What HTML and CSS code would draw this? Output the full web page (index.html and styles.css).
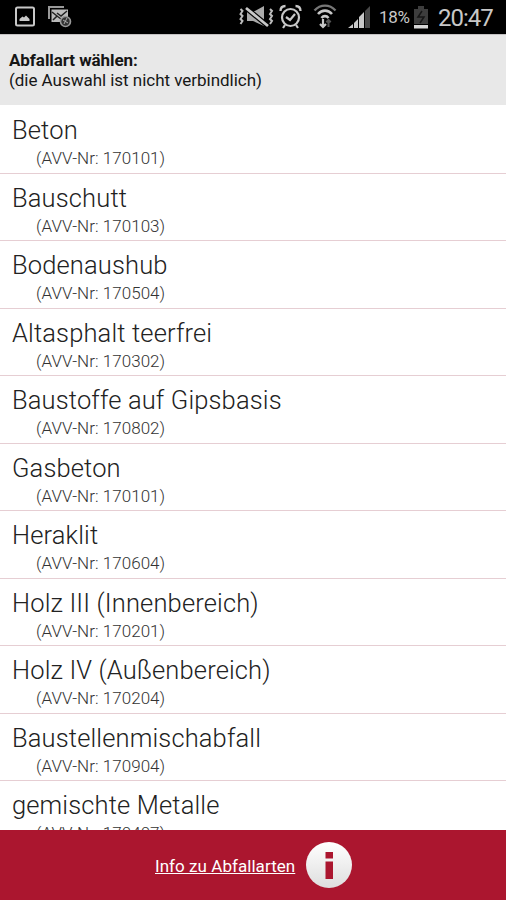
FILE: index.html
```html
<!DOCTYPE html>
<html lang="de">
<head>
<meta charset="utf-8">
<title>Abfallart wählen</title>
<link rel="stylesheet" href="styles.css">
</head>
<body>
<div class="screen">
  <div class="status">
    <svg class="status-icons" width="370" height="34" viewBox="0 0 370 34" fill="none" stroke="#c8c8c8">
      <rect x="16" y="7.500" width="18" height="18" rx="1.500" stroke-width="2"/>
      <path d="M19.500 21v-2l3-2.500 1.500 1 2-2 3.500 3.500v2z" fill="#c8c8c8" stroke="none"/>
      <path d="M49 19V7h15" stroke="#999" stroke-width="2"/>
      <path d="M51.500 9.500H68V22H51.500z" fill="#bbb" stroke="none"/>
      <path d="M52 12l5 4-4 4M67 11l-6 5-4-3M57 16l4 3" stroke="#222" stroke-width="1.500"/>
      <circle cx="65.500" cy="21.500" r="5" fill="#333" stroke="#999" stroke-width="1.600"/>
      <path d="M63 20l5 3M67 18l-3 6" stroke="#aaa"/>
      <path d="M247 12h6l11-6v20l-11-5h-6z" fill="#aaa" stroke="none"/>
      <path d="M246 8l22 18" stroke="#000" stroke-width="5"/>
      <path d="M246 8l22 18" stroke-width="2.800"/>
      <path d="M240.500 9l2 2-2 3 2 2-2 3 2 2-2 3M270 9l2 2-2 3 2 2-2 3 2 2-2 3" stroke="#bbb" stroke-width="2"/>
      <circle cx="290.500" cy="17.500" r="8.500" stroke-width="2.200"/>
      <path d="M286 17l4 3 5-6M285 25l-2 3M296 25l2 3" stroke-width="2.200"/>
      <path d="M280.500 11c0-3 2-5 5-5M300.500 11c0-3-2-5-5-5" stroke-width="2.300"/>
      <path d="M314.500 10.500c6-6.500 15-6.500 21 0" stroke="#777" stroke-width="2.400"/>
      <path d="M318 14c4-4.500 10-4.500 14 0M321.500 18c2-2.500 5-2.500 7 0" stroke-width="2.600"/>
      <path d="M323 19v8M320 24l3 3 3-3" stroke-width="2.200"/>
      <path d="M328.500 27v-7M326.300 22.300l2.200-2.300 2.200 2.300" stroke="#555" stroke-width="2"/>
      <path d="M348 28l5-4v4zM354 23l4-4v9h-4zM359 17l5-5v16h-5z" fill="#c8c8c8" stroke="none"/>
      <path d="M365 11l6-6v23h-6z" fill="#484848" stroke="none"/>
    </svg>
    <span class="percent">18%</span>
    <svg class="battery" width="16" height="24" viewBox="0 0 16 24">
      <path d="M5 0h6v3h4v15H1V3h4z" fill="#3d3d3d"/>
      <path d="M9 5l-4 6h6l-4 6" fill="none" stroke="#161616" stroke-width="1.500"/>
      <path d="M1 19h14v3.500H1z" fill="#d5d5d5"/>
    </svg>
    <span class="clock">20:47</span>
  </div>
  <header class="head"><b class="head-title">Abfallart wählen:</b><span class="head-note">(die Auswahl ist nicht verbindlich)</span></header>
  <main class="list">
    <div class="row"><div class="name">Beton</div><div class="code">(AVV-Nr: 170101)</div></div>
    <div class="row"><div class="name">Bauschutt</div><div class="code">(AVV-Nr: 170103)</div></div>
    <div class="row"><div class="name">Bodenaushub</div><div class="code">(AVV-Nr: 170504)</div></div>
    <div class="row"><div class="name">Altasphalt teerfrei</div><div class="code">(AVV-Nr: 170302)</div></div>
    <div class="row"><div class="name">Baustoffe auf Gipsbasis</div><div class="code">(AVV-Nr: 170802)</div></div>
    <div class="row"><div class="name">Gasbeton</div><div class="code">(AVV-Nr: 170101)</div></div>
    <div class="row"><div class="name">Heraklit</div><div class="code">(AVV-Nr: 170604)</div></div>
    <div class="row"><div class="name">Holz III (Innenbereich)</div><div class="code">(AVV-Nr: 170201)</div></div>
    <div class="row"><div class="name">Holz IV (Außenbereich)</div><div class="code">(AVV-Nr: 170204)</div></div>
    <div class="row"><div class="name">Baustellenmischabfall</div><div class="code">(AVV-Nr: 170904)</div></div>
    <div class="row"><div class="name">gemischte Metalle</div><div class="code">(AVV-Nr: 170407)</div></div>
  </main>
  <footer class="foot">
    <a class="link">Info zu Abfallarten</a>
    <svg width="46" height="46" viewBox="0 0 46 46">
      <defs><linearGradient id="g" x1="0" y1="0" x2="0" y2="1"><stop offset="0" stop-color="#fff"/><stop offset="1" stop-color="#dedede"/></linearGradient></defs>
      <circle cx="23" cy="23" r="23" fill="url(#g)"/>
      <path d="M19.500 10h7.500v6.500h-7.500zM19.500 19.500h7.500V37h-7.500z" fill="#ab162f"/>
    </svg>
  </footer>
</div>
</body>
</html>
```
FILE: styles.css
```css
body {
  margin: 0;
  font-family: Roboto, "Liberation Sans", sans-serif;
}

.screen {
  width: 506px;
  height: 900px;
  display: flex;
  flex-direction: column;
  overflow: hidden;
  background: #fff;
}

.status {
  height: 34px;
  flex: none;
  display: flex;
  align-items: center;
  background: #000;
  color: #c8c8c8;
}

.status-icons {
  flex: none;
}

.percent {
  width: 43px;
  padding-left: 9px;
  box-sizing: border-box;
  font-size: 17px;
  line-height: 34px;
  letter-spacing: -0.300px;
}

.battery {
  margin-top: 1px;
}

.clock {
  margin-left: 9px;
  padding-top: 2px;
  font-size: 24px;
  line-height: 32px;
  letter-spacing: -1px;
}

.head {
  height: 71px;
  box-sizing: border-box;
  flex: none;
  display: flex;
  flex-direction: column;
  padding: 15px 9px 0;
  border-top: 1px solid #c4c2c3;
  background: #e8e8e8;
  color: #161616;
  font-size: 17px;
  line-height: 20px;
}

.head-title {
  letter-spacing: -0.070px;
}

.head-note {
  letter-spacing: -0.030px;
}

.list {
  flex: 1;
  min-height: 0;
  overflow: hidden;
  padding-top: 1px;
}

.row {
  height: 67.500px;
  box-sizing: border-box;
  padding: 9px 12px 0;
  border-bottom: 1px solid #e6ced3;
}

.name {
  font-size: 25.500px;
  line-height: 30px;
  font-weight: 300;
  letter-spacing: 0.140px;
  color: #222;
}

.code {
  padding: 3px 0 0 24px;
  font-size: 17px;
  line-height: 20px;
  font-weight: 300;
  letter-spacing: 0.040px;
  color: #333;
}

.foot {
  height: 70px;
  flex: none;
  display: flex;
  align-items: center;
  gap: 11px;
  padding-left: 155px;
  box-sizing: border-box;
  background: #ab162f;
}

.link {
  padding-top: 1px;
  color: #fff;
  font-size: 17px;
  line-height: 20px;
  letter-spacing: 0.050px;
  text-decoration: underline;
}
```
